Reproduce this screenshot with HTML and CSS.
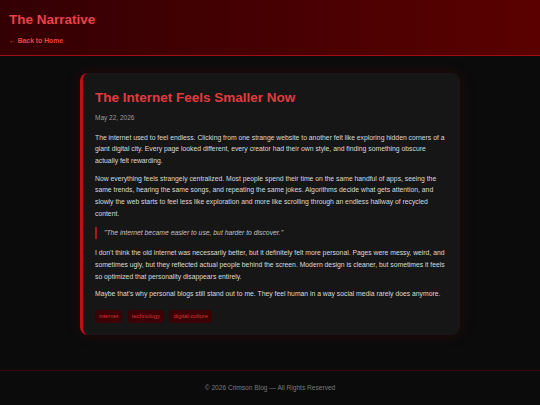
FILE: index.html
```html
<!DOCTYPE html>
<html lang="en">
<head>
<meta charset="utf-8">
<title>The Narrative</title>
<link rel="stylesheet" href="styles.css">
</head>
<body>
<header class="site-header">
  <h1 class="site-title">The Narrative</h1>
  <a class="back-link" href="#">← Back to Home</a>
</header>
<main class="main">
  <article class="post">
    <h2 class="post-title">The Internet Feels Smaller Now</h2>
    <p class="post-date">May 22, 2026</p>
    <p class="para">The internet used to feel endless. Clicking from one strange website to another felt like exploring hidden corners of a giant digital city. Every page looked different, every creator had their own style, and finding something obscure actually felt rewarding.</p>
    <p class="para">Now everything feels strangely centralized. Most people spend their time on the same handful of apps, seeing the same trends, hearing the same songs, and repeating the same jokes. Algorithms decide what gets attention, and slowly the web starts to feel less like exploration and more like scrolling through an endless hallway of recycled content.</p>
    <blockquote class="quote">"The internet became easier to use, but harder to discover."</blockquote>
    <p class="para">I don't think the old internet was necessarily better, but it definitely felt more personal. Pages were messy, weird, and sometimes ugly, but they reflected actual people behind the screen. Modern design is cleaner, but sometimes it feels so optimized that personality disappears entirely.</p>
    <p class="para">Maybe that's why personal blogs still stand out to me. They feel human in a way social media rarely does anymore.</p>
    <div class="tags">
      <span class="tag">internet</span>
      <span class="tag">technology</span>
      <span class="tag">digital-culture</span>
    </div>
  </article>
</main>
<footer class="site-footer">© 2026 Crimson Blog — All Rights Reserved</footer>
</body>
</html>
```
FILE: styles.css
```css
* { box-sizing: border-box; }
html, body { margin: 0; padding: 0; }
body {
  background: #0b0b0c;
  font-family: "Liberation Sans", Arial, sans-serif;
  color: #d4d4d4;
}
.site-header {
  height: 56px;
  padding: 11px 9px 0;
  background: linear-gradient(90deg, #330004 0%, #5a0000 100%);
  border-bottom: 1px solid #a10e0e;
}
.site-title {
  margin: 0;
  font-size: 13.5px;
  font-weight: bold;
  color: #e8434a;
  line-height: 18px;
}
.back-link {
  display: inline-block;
  margin-top: 7px;
  font-size: 6.8px;
  font-weight: bold;
  color: #e8434a;
  text-decoration: none;
  line-height: 9px;
}
.main {
  padding: 17px 0 35px;
  display: flex;
  justify-content: center;
}
.post {
  width: 380px;
  background: #161616;
  border-left: 3px solid #c40e0e;
  border-radius: 8px;
  padding: 15px 13px 12px 12px;
  box-shadow: 0 0 14px rgba(110, 0, 0, 0.3);
}
.post-title {
  margin: 0;
  font-size: 13.5px;
  font-weight: bold;
  color: #e23b3f;
  line-height: 20px;
}
.post-date {
  margin: 5px 0 8.5px;
  font-size: 6.5px;
  line-height: 10px;
  color: #9a9a9a;
}
.para {
  font-size: 6.8px;
  line-height: 11.7px;
  margin: 0 0 6px;
  color: #dadada;
}
.quote {
  margin: 7.7px 0 8.3px;
  padding-left: 7px;
  border-left: 2px solid #b01818;
  font-style: italic;
  font-size: 6.8px;
  line-height: 11.7px;
  color: #c2c2c2;
}
.tags {
  display: flex;
  gap: 5.5px;
  margin-top: 10px;
}
.tag {
  background: #3a0205;
  color: #d8343a;
  font-size: 5.8px;
  line-height: 6.6px;
  padding: 3px 4px;
  border-radius: 4px;
}
.site-footer {
  border-top: 1px solid #3a0508;
  text-align: center;
  font-size: 6.6px;
  line-height: 9px;
  color: #7a7a7a;
  padding: 12px 0 14px;
}
```
